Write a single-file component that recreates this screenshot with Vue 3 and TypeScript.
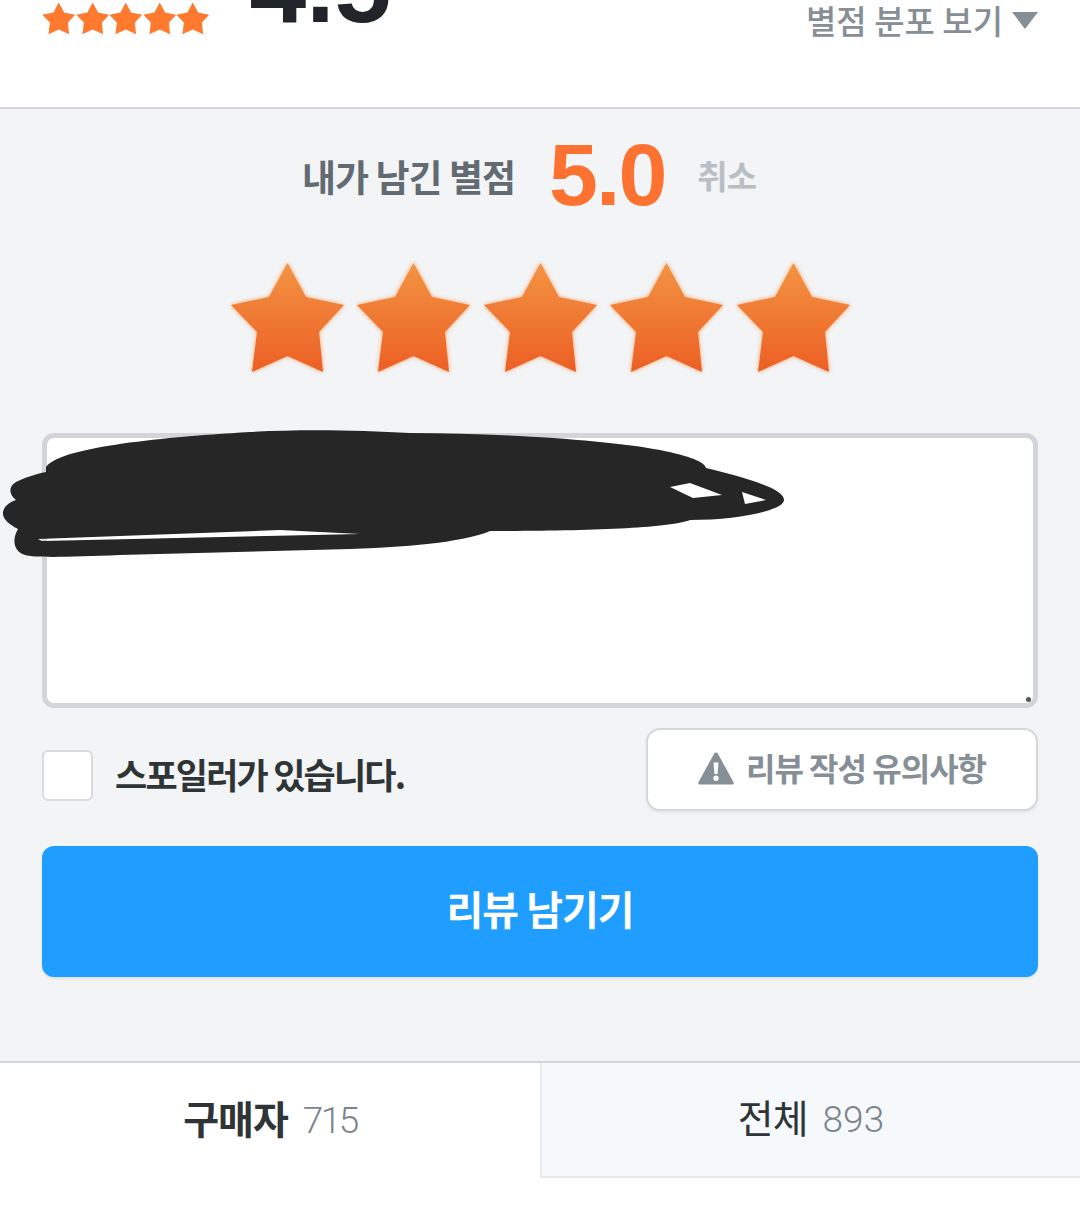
<template>
  <div class="review-page">
    <section class="summary">
      <div class="summary-stars">
        <svg v-for="n in 5" :key="n" class="mini-star" viewBox="0 0 115 112">
          <polygon :points="starPoints" fill="#ff7a2e" />
        </svg>
      </div>
      <div class="summary-score">4.5</div>
      <button class="dist-toggle">
        <span>별점 분포 보기</span>
        <i class="caret"></i>
      </button>
    </section>

    <section class="write">
      <div class="my-rating">
        <span class="my-label">내가 남긴 별점</span>
        <span class="my-score">5.0</span>
        <button class="cancel">취소</button>
      </div>

      <div class="rating-stars">
        <svg v-for="n in 5" :key="n" class="big-star" viewBox="0 0 115 112">
          <defs>
            <linearGradient :id="`starFill${n}`" x1="0" y1="0" x2="0" y2="1">
              <stop offset="0" stop-color="#f39443" />
              <stop offset="1" stop-color="#ec5f24" />
            </linearGradient>
          </defs>
          <polygon :points="starPoints" :fill="`url(#starFill${n})`" />
        </svg>
      </div>

      <div class="review-box">
        <textarea class="review-input"></textarea>
        <i class="grip"></i>
      </div>

      <div class="options">
        <label class="spoiler">
          <input type="checkbox" class="check" />
          <span>스포일러가 있습니다.</span>
        </label>
        <button class="notice">
          <svg class="warn" viewBox="0 0 36 33">
            <path
              fill-rule="evenodd"
              fill="#868e96"
              d="M18 0.5c.8 0 1.400.4 1.800 1l15.600 28.400c.8 1.400-.1 2.600-1.600 2.600H2.200C.7 32.500-.2 31.300.6 29.900L16.200 1.500c.4-.6 1-1 1.800-1zM15.500 10.500l.9 11.500h3.200l.9-11.500zM18 23.500a2.700 2.700 0 1 0 0 5.400 2.700 2.700 0 0 0 0-5.400z"
            />
          </svg>
          <span class="notice-text">리뷰 작성 유의사항</span>
        </button>
      </div>

      <button class="submit">리뷰 남기기</button>
    </section>

    <nav class="tabs">
      <div class="tab active">
        <span class="tab-name">구매자</span>
        <span class="tab-count">715</span>
      </div>
      <div class="tab">
        <span class="tab-name">전체</span>
        <span class="tab-count">893</span>
      </div>
    </nav>

    <!-- marker scribble over the review text -->
    <svg class="scribble" viewBox="0 0 800 150">
      <path
        fill="#262626"
        fill-rule="evenodd"
        d="M46 47 C60 28 150 18 250 12 C300 9 360 10 410 13 C500 13 610 20 660 30 C690 36 705 42 706 48
           C740 56 784 68 784 80 C784 90 740 100 690 100 C670 108 590 111 490 111
           C470 120 420 127 350 129 L120 135 C70 137 35 138 25 135 C13 131 12 119 18 109
           C8 104 2 98 3 92 C4 86 10 82 16 80 C8 74 9 66 16 62 C24 58 36 54 46 52 Z
           M38 119 L280 110 L360 114 L42 121 Z
           M670 67 L690 63 L722 75 L693 78 Z
           M742 72 L766 80 L745 84 Z"
      />
    </svg>
  </div>
</template>

<script setup lang="ts">
const starPoints = '57.5,1 76,35 114,43 89,70 93,110 57.5,94 22,110 27,70 1,43 39,35';
</script>

<style>
html, body { background: #fff; }
</style>

<style scoped>
* { box-sizing: border-box; }

.review-page {
  position: relative;
  width: 1080px;
  height: 1210px;
  overflow: hidden;
  background: #fff;
  font-family: "Noto Sans CJK KR", "Noto Sans", sans-serif;
}

.summary {
  display: flex;
  height: 109px;
  padding: 0 42px;
  border-bottom: 2px solid #d3d5d9;
  overflow: hidden;
}

.summary-stars {
  display: flex;
  margin-top: 2px;
}

.mini-star {
  width: 33.5px;
  height: 33px;
}

.summary-score {
  margin: -63px 0 0 40px;
  font-family: "Liberation Sans", sans-serif;
  font-size: 102px;
  line-height: 100px;
  font-weight: 700;
  color: #212529;
}

.dist-toggle {
  display: flex;
  align-items: center;
  gap: 9px;
  height: 40px;
  margin-left: auto;
  padding: 0;
  border: none;
  background: none;
  font: inherit;
  font-size: 33px;
  font-weight: 500;
  color: #868e96;
}

.caret {
  width: 0;
  height: 0;
  border-left: 13px solid transparent;
  border-right: 13px solid transparent;
  border-top: 17px solid #868e96;
}

.write {
  height: 954px;
  padding: 0 42px;
  background: #f2f4f6;
  border-bottom: 2px solid #d3d5d9;
}

.my-rating {
  display: flex;
  align-items: center;
  justify-content: center;
  height: 132px;
  padding-right: 22px;
}

.my-label {
  margin-top: 2px;
  font-size: 37px;
  font-weight: 700;
  letter-spacing: -1px;
  color: #626a72;
}

.my-score {
  margin: 0 32px 0 34px;
  font-family: "Liberation Sans", sans-serif;
  font-size: 88px;
  font-weight: 700;
  letter-spacing: -2px;
  color: #fd7231;
}

.cancel {
  padding: 0;
  border: none;
  background: none;
  font: inherit;
  font-size: 33px;
  font-weight: 700;
  letter-spacing: -1px;
  color: #b9bec4;
}

.rating-stars {
  display: flex;
  justify-content: center;
  gap: 11.5px;
  margin-top: 21px;
}

.big-star {
  width: 115px;
  height: 112px;
  filter: drop-shadow(0 0 2px rgba(255, 150, 80, 0.9));
}

.review-box {
  position: relative;
  height: 275px;
  margin-top: 59px;
}

.review-input {
  display: block;
  width: 100%;
  height: 100%;
  border: 5px solid #d3d5da;
  border-radius: 12px;
  background: #fff;
  resize: none;
}

.grip {
  position: absolute;
  right: 7px;
  bottom: 6px;
  width: 5px;
  height: 5px;
  border-radius: 50%;
  background: #555;
}

.options {
  display: flex;
  justify-content: space-between;
  align-items: flex-start;
  margin-top: 20px;
}

.spoiler {
  display: flex;
  align-items: center;
  gap: 22px;
  margin-top: 22px;
  font-size: 35px;
  font-weight: 700;
  letter-spacing: -1.8px;
  color: #2f3437;
}

.spoiler span {
  margin-top: -4px;
}

.check {
  appearance: none;
  width: 51px;
  height: 51px;
  margin: 0;
  border: 2px solid #d8dadd;
  border-radius: 6px;
  background: #fff;
}

.notice {
  display: flex;
  align-items: center;
  justify-content: center;
  gap: 12px;
  width: 392px;
  height: 83px;
  padding: 0;
  border: 2px solid #d5d7db;
  border-radius: 14px;
  background: #fff;
  box-shadow: 0 2px 3px rgba(0, 0, 0, 0.06);
  font: inherit;
  font-size: 32px;
  font-weight: 700;
  letter-spacing: -1px;
  color: #868e96;
}

.notice-text {
  margin-top: -6px;
}

.warn {
  width: 36px;
  height: 33px;
  margin-top: -2px;
}

.submit {
  display: block;
  width: 100%;
  height: 131px;
  margin-top: 35px;
  padding: 0 0 7px;
  border: none;
  border-radius: 12px;
  background: #1f9eff;
  box-shadow: 0 2px 3px rgba(0, 0, 0, 0.08);
  font: inherit;
  font-size: 40px;
  font-weight: 700;
  letter-spacing: -1px;
  color: #fff;
}

.tabs {
  display: flex;
  height: 115px;
}

.tab {
  display: flex;
  flex: 0 0 50%;
  align-items: center;
  justify-content: center;
  gap: 15px;
  background: #f6f9fc;
  border-left: 2px solid #e6e9ec;
  border-bottom: 2px solid #e6e9ec;
}

.tab.active {
  background: #fff;
  border: none;
}

.tab-name {
  margin-bottom: 8px;
  font-size: 39px;
  letter-spacing: -1px;
  color: #2f3437;
}

.active .tab-name {
  font-weight: 700;
}

.tab-count {
  font-family: Roboto, "Liberation Sans", sans-serif;
  font-size: 37px;
  font-weight: 300;
  color: #7c848c;
}

.active .tab-count {
  letter-spacing: -2.5px;
}

.scribble {
  position: absolute;
  top: 420px;
  left: 0;
  width: 800px;
  height: 150px;
}
</style>
